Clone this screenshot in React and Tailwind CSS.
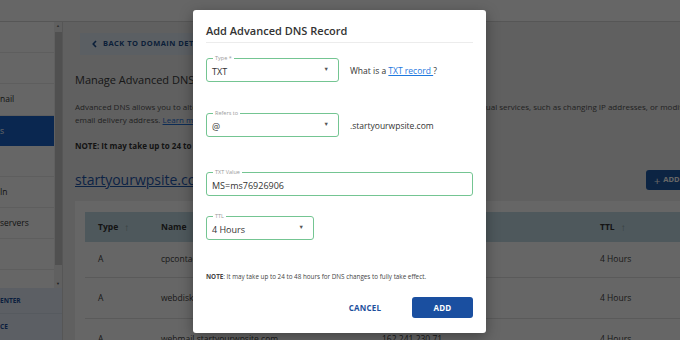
import React from "react";

const sideItems = [
  { label: "", h: "h-[31px]" },
  { label: "", h: "h-[31px]" },
  { label: "nail", h: "h-[32px]" },
  { label: "s", h: "h-[30px]", active: true },
  { label: "", h: "h-[31px]" },
  { label: "In", h: "h-[31px]" },
  { label: "servers", h: "h-[31px]" },
  { label: "", h: "h-[31px]" },
];

const rows = [
  { type: "A", name: "cpcontacts.startyourwpsite.com", value: "162.241.230.71", ttl: "4 Hours", h: "h-[36px]" },
  { type: "A", name: "webdisk.startyourwpsite.com", value: "162.241.230.71", ttl: "4 Hours", h: "h-[41px]" },
  { type: "A", name: "webmail.startyourwpsite.com", value: "162.241.230.71", ttl: "4 Hours", h: "h-[41px]" },
];

function Caret() {
  return <span className="text-[5.5px] leading-none text-[#555]">▼</span>;
}

function Field({ label, width, children, caret }) {
  return (
    <div className={`relative ${width} h-[24px] border border-[#74c592] rounded-[3px] flex items-center justify-between pl-[5px] pr-[9px]`}>
      <span className="absolute -top-[4px] left-[6px] bg-white px-[2px] text-[5.5px] leading-[7px] text-[#9a9a9a]">{label}</span>
      <span className="text-[9px] leading-none text-[#333] mt-[3px]">{children}</span>
      {caret && <Caret />}
    </div>
  );
}

function Background() {
  return (
    <div className="w-[680px] h-[340px] flex flex-col bg-[#efefef] overflow-hidden">
      <div className="h-[22px] bg-white border-b border-[#d8d8d8] shrink-0" />
      <div className="flex flex-1 min-h-0">
        {/* sidebar */}
        <div className="w-[63px] shrink-0 flex flex-col bg-white border-r border-[#d6d6d6]">
          <div className="flex flex-1 min-h-0">
            <div className="w-[55px] flex flex-col">
              {sideItems.map((it, i) => (
                <div
                  key={i}
                  className={`${it.h} flex items-center text-[8.5px] ${it.active ? "bg-[#1a62c8] text-white" : "border-b border-[#ececec] text-[#333]"}`}
                >
                  {it.label}
                </div>
              ))}
            </div>
            <div className="w-[8px] bg-[#f1f1f1] flex flex-col items-center">
              <span className="text-[4px] leading-[8px] text-[#777]">▲</span>
              <div className="w-[7px] h-[233px] bg-[#c9c9c9] mt-[2px]" />
              <div className="flex-1" />
              <span className="text-[4px] leading-[8px] text-[#555]">▼</span>
            </div>
          </div>
          <div className="h-[52px] shrink-0 bg-[#e6eefa] flex flex-col text-[6.5px] font-bold text-[#1c4f9c]">
            <div className="h-[26px] flex items-center border-b border-[#d6e0ee]">ENTER</div>
            <div className="h-[26px] flex items-center">CE</div>
          </div>
        </div>

        {/* main */}
        <div className="flex-1 overflow-hidden">
          <div className="w-[720px] pl-[12px] pt-[11px]">
            <div className="ml-[5px] w-[190px] h-[22px] bg-[#e3edf8] flex items-center pl-[12px] gap-[6px] text-[7.5px] font-bold tracking-[0.06em] text-[#1d4f8e]">
              <svg width="5" height="8" viewBox="0 0 5 8" fill="none" stroke="currentColor" strokeWidth="1.6">
                <path d="M4 1L1.2 4L4 7" />
              </svg>
              BACK TO DOMAIN DETAILS
            </div>
            <div className="mt-[17px] text-[11px] leading-[16px] text-[#3a3a3a]">Manage Advanced DNS Records</div>
            <p className="mt-[12px] text-[8px] leading-[13px] text-[#555] whitespace-nowrap">
              Advanced DNS allows you to alter records of your domain, so it points to the services you use, or set up individual services, such as changing IP addresses, or modifying your
              <br />
              email delivery address. <span className="text-[#1e6fd6] underline">Learn more</span>
            </p>
            <div className="mt-[14px] text-[8px] leading-[12px] font-bold text-[#333] whitespace-nowrap">
              NOTE: It may take up to 24 to 48 hours for DNS changes to fully take effect.
            </div>
            <div className="mt-[18px] w-[661px] flex items-center justify-between">
              <span className="text-[14px] leading-[20px] text-[#1f57ad] underline">startyourwpsite.com</span>
              <div className="w-[90px] h-[20px] rounded-[3px] bg-[#1f5aa8] flex items-center pl-[8px] gap-[3px] text-white text-[7.5px] font-bold">
                <span className="text-[11px] leading-none font-normal">+</span>ADD RECORD
              </div>
            </div>
            <div className="mt-[11px] bg-white pt-[11px] pl-[10px]">
              <div className="grid grid-cols-[63px_221px_218px_120px] h-[30px] items-center bg-[#c3dde6] text-[8.5px] font-bold text-[#333]">
                <div className="pl-[13px] flex items-center gap-[6px]">Type <span className="text-[10px] leading-none font-normal text-[#8a9aa0]">↑</span></div>
                <div className="pl-[13px]">Name</div>
                <div className="pl-[13px]">Value</div>
                <div className="pl-[13px] flex items-center gap-[6px]">TTL <span className="text-[10px] leading-none font-normal text-[#8a9aa0]">↑</span></div>
              </div>
              {rows.map((r, i) => (
                <div key={i} className={`grid grid-cols-[63px_221px_218px_120px] ${r.h} items-center border-b border-[#e2e2e2] text-[8.5px] text-[#444]`}>
                  <div className="pl-[13px]">{r.type}</div>
                  <div className="pl-[13px]">{r.name}</div>
                  <div className="pl-[13px]">{r.value}</div>
                  <div className="pl-[13px]">{r.ttl}</div>
                </div>
              ))}
            </div>
          </div>
        </div>
      </div>
    </div>
  );
}

function Modal() {
  return (
    <div className="absolute left-[193px] top-[10px] w-[293px] h-[323px] bg-white rounded-[3px] shadow-[0_4px_14px_rgba(0,0,0,0.35)] px-[13px] pt-[13px]">
      <div className="text-[11px] leading-[16px] font-semibold text-[#333] pb-[3px] border-b border-[#ececec]">
        Add Advanced DNS Record
      </div>

      <div className="mt-[15px] flex items-center gap-[11px]">
        <Field label="Type *" width="w-[133px]" caret>TXT</Field>
        <span className="text-[8.5px] text-[#333] mt-[3px]">
          What is a <span className="text-[#1e78de] underline">TXT record </span>?
        </span>
      </div>

      <div className="mt-[31px] flex items-center gap-[11px]">
        <Field label="Refers to" width="w-[133px]" caret>@</Field>
        <span className="text-[8.5px] text-[#333] mt-[3px]">.startyourwpsite.com</span>
      </div>

      <div className="mt-[35px]">
        <Field label="TXT Value" width="w-[267px]">MS=ms76926906</Field>
      </div>

      <div className="mt-[20px]">
        <Field label="TTL" width="w-[108px]" caret>4 Hours</Field>
      </div>

      <div className="mt-[33px] text-[6.3px] leading-[8px] text-[#444] whitespace-nowrap">
        <span className="font-bold">NOTE</span>: It may take up to 24 to 48 hours for DNS changes to fully take effect.
      </div>

      <div className="mt-[16px] flex justify-end items-center">
        <button className="w-[60px] h-[21px] text-[8px] font-bold tracking-[0.03em] text-[#1d4f9c] mr-[17px]">CANCEL</button>
        <button className="w-[61px] h-[21px] rounded-[3px] bg-[#1a4fa0] text-[8px] font-bold tracking-[0.03em] text-white">ADD</button>
      </div>
    </div>
  );
}

export default function App() {
  return (
    <div className="relative w-[680px] h-[340px] overflow-hidden font-['Open_Sans',sans-serif]">
      <Background />
      <div className="absolute inset-0 bg-black/60" />
      <Modal />
    </div>
  );
}
